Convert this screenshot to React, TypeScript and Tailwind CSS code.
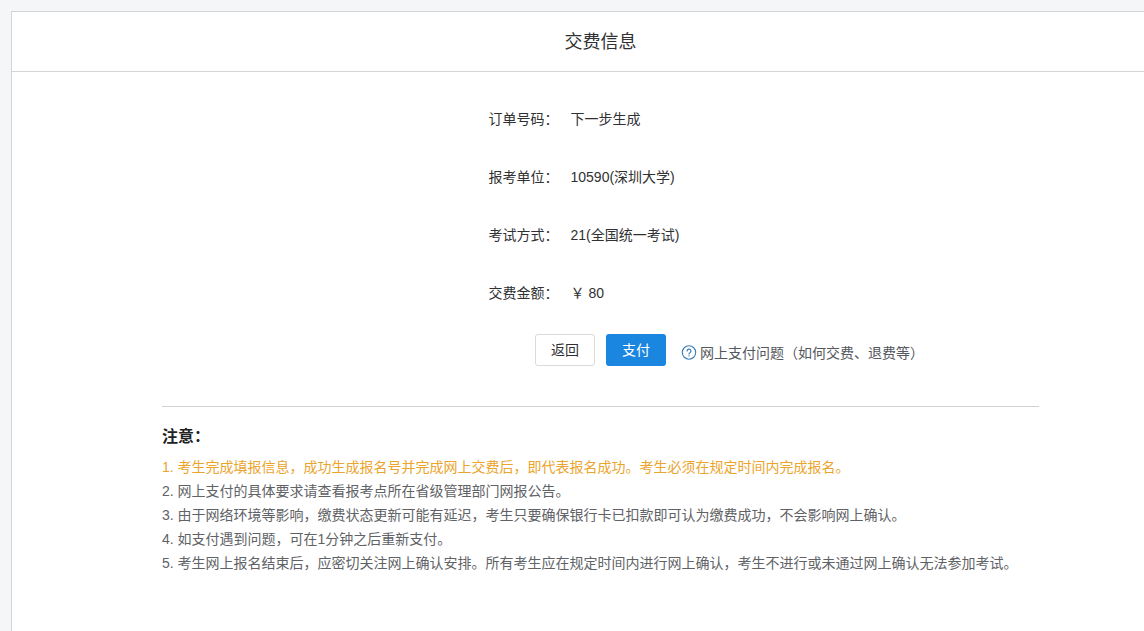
import React from "react";

interface OrderRow {
  label: string;
  value: string;
}

const orderRows: OrderRow[] = [
  { label: "订单号码：", value: "下一步生成" },
  { label: "报考单位：", value: "10590(深圳大学)" },
  { label: "考试方式：", value: "21(全国统一考试)" },
  { label: "交费金额：", value: "￥ 80" },
];

const notices: string[] = [
  "考生完成填报信息，成功生成报名号并完成网上交费后，即代表报名成功。考生必须在规定时间内完成报名。",
  "网上支付的具体要求请查看报考点所在省级管理部门网报公告。",
  "由于网络环境等影响，缴费状态更新可能有延迟，考生只要确保银行卡已扣款即可认为缴费成功，不会影响网上确认。",
  "如支付遇到问题，可在1分钟之后重新支付。",
  "考生网上报名结束后，应密切关注网上确认安排。所有考生应在规定时间内进行网上确认，考生不进行或未通过网上确认无法参加考试。",
];

const HelpIcon = () => (
  <svg
    viewBox="0 0 16 16"
    className="size-4 shrink-0 text-[#3a7db5]"
    fill="none"
    stroke="currentColor"
    strokeLinecap="round"
    aria-hidden="true"
  >
    <circle cx="8" cy="7.5" r="6.7" strokeWidth="1.1" />
    <path d="M6.1 6a1.9 1.9 0 1 1 2.8 1.7c-.6.3-.9.6-.9 1.2" strokeWidth="1.2" />
    <circle cx="8" cy="10.9" r=".7" fill="currentColor" stroke="none" />
  </svg>
);

const OrderInfo = () => (
  <dl className="mx-auto flex w-56 flex-col gap-[26px] text-sm leading-8 text-[#303133]">
    {orderRows.map((row) => (
      <div key={row.label} className="flex gap-3 whitespace-nowrap">
        <dt>{row.label}</dt>
        <dd>{row.value}</dd>
      </div>
    ))}
  </dl>
);

const Actions = () => (
  <div className="mt-[25px] grid grid-cols-[1fr_auto_1fr] text-sm">
    <div className="col-start-2 flex gap-[11px]">
      <button
        type="button"
        className="h-8 w-[60px] rounded-[3px] border border-[#d8dade] bg-white text-[#303133]"
      >
        返回
      </button>
      <button
        type="button"
        className="h-8 w-[60px] rounded-[3px] bg-[#1a86e0] text-white"
      >
        支付
      </button>
    </div>
    <a
      href="#"
      className="ml-[15px] flex h-[26px] items-center gap-[3px] self-end whitespace-nowrap text-[#55585e]"
    >
      <HelpIcon />
      网上支付问题（如何交费、退费等）
    </a>
  </div>
);

const Notice = () => (
  <section className="mt-10 border-t border-[#cfd2d5] pt-[18px]">
    <h2 className="text-base leading-6 font-bold text-[#222222]">注意：</h2>
    <ol className="mt-1.5 text-sm leading-6 text-[#606266]">
      {notices.map((notice, index) => (
        <li key={index} className="first:text-[#eba42c]">
          {`${index + 1}. ${notice}`}
        </li>
      ))}
    </ol>
  </section>
);

const App: React.FC = () => {
  return (
    <div
      lang="zh-CN"
      className="flex min-h-screen flex-col bg-[#f5f6f8] pt-[11px] pl-[11px] font-['Liberation_Sans','Noto_Sans_CJK_SC',sans-serif]"
    >
      <main className="grow border-t border-l border-[#d2d5d8] bg-white">
        <header className="border-b border-[#d2d5d8] pr-[105px] pl-[150px]">
          <h1 className="pt-[17px] pb-[15px] text-center text-lg leading-[27px] text-[#303133]">
            交费信息
          </h1>
        </header>
        <div className="pt-[31px] pr-[105px] pb-14 pl-[150px]">
          <OrderInfo />
          <Actions />
          <Notice />
        </div>
      </main>
    </div>
  );
};

export default App;
